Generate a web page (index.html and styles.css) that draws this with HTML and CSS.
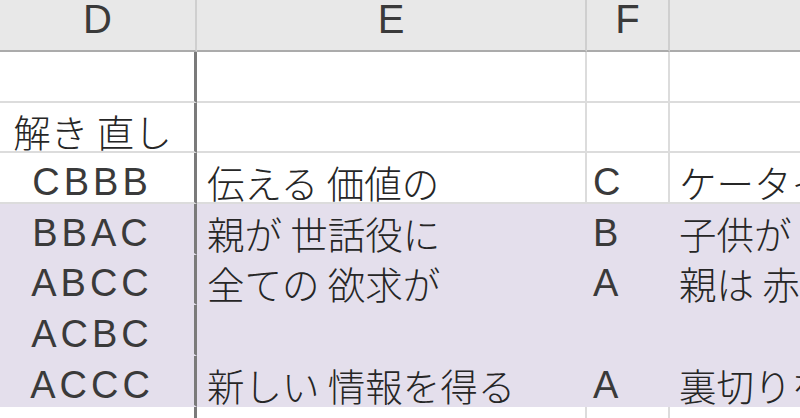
FILE: index.html
```html
<!DOCTYPE html>
<html lang="ja">
<head>
<meta charset="utf-8">
<title>Sheet</title>
<link rel="stylesheet" href="styles.css">
</head>
<body>
<div class="sheet">
  <div class="hc">D</div><div class="hc">E</div><div class="hc">F</div><div class="hc hc-last"></div>

  <div class="c d"></div><div class="c e"></div><div class="c f"></div><div class="c g"></div>

  <div class="c d">解き 直し</div><div class="c e"></div><div class="c f"></div><div class="c g"></div>

  <div class="c d lat">CBBB</div><div class="c e">伝える 価値の</div><div class="c f lat">C</div><div class="c g">ケータイ</div>

  <div class="c d lat p">BBAC</div><div class="c e p">親が 世話役に</div><div class="c f lat p">B</div><div class="c g p">子供が</div>

  <div class="c d lat p">ABCC</div><div class="c e p">全ての 欲求が</div><div class="c f lat p">A</div><div class="c g p">親は 赤</div>

  <div class="c d lat p">ACBC</div><div class="c e p"></div><div class="c f lat p"></div><div class="c g p"></div>

  <div class="c d lat p">ACCC</div><div class="c e p">新しい 情報を得る</div><div class="c f lat p">A</div><div class="c g p">裏切りを</div>

  <div class="c d"></div><div class="c e"></div><div class="c f"></div><div class="c g"></div>
</div>
</body>
</html>
```

FILE: styles.css
```css
html, body {
  margin: 0;
  padding: 0;
  background: #ffffff;
  overflow: hidden;
}

.sheet {
  width: 800px;
  height: 418px;
  overflow: hidden;
  display: grid;
  grid-template-columns: 197px 390px 83px 1fr;
  grid-template-rows: 52px repeat(7, 50.67px) 50px;
  font-family: "Noto Sans CJK JP", "Noto Sans", sans-serif;
  color: #262626;
}

.hc {
  background: #e8e8e8;
  border-bottom: 2px solid #ababab;
  border-right: 2px solid #cfcfcf;
  font-family: "Liberation Sans", "DejaVu Sans", sans-serif;
  font-size: 40px;
  line-height: 38px;
  text-align: center;
  color: #3a3a3a;
}

.hc-last {
  border-right: none;
}

.c {
  box-sizing: border-box;
  border-right: 2px solid #dcdcdc;
  border-bottom: 2px solid #dcdcdc;
  font-size: 37.5px;
  font-weight: 300;
  line-height: 40px;
  white-space: nowrap;
  display: flex;
  align-items: flex-end;
}

.d {
  border-right: 3px solid #7a7a7a;
  justify-content: center;
  padding-right: 9px;
}

.e {
  padding-left: 10px;
}

.f {
  padding-left: 6px;
}

.g {
  border-right: none;
  padding-left: 9px;
}

.lat {
  font-family: "Liberation Sans", "Arial", sans-serif;
  font-weight: normal;
  font-size: 38px;
  letter-spacing: 4px;
  color: #3a3a3a;
}

.d.lat {
  padding-left: 4px;
  padding-right: 14px;
}

.p {
  background: #e4dfec;
  border-bottom-color: #e4dfec;
}

.e.p, .f.p {
  border-right-color: #e4dfec;
}

.d.p {
  border-right-color: #7a7a7a;
}
```
